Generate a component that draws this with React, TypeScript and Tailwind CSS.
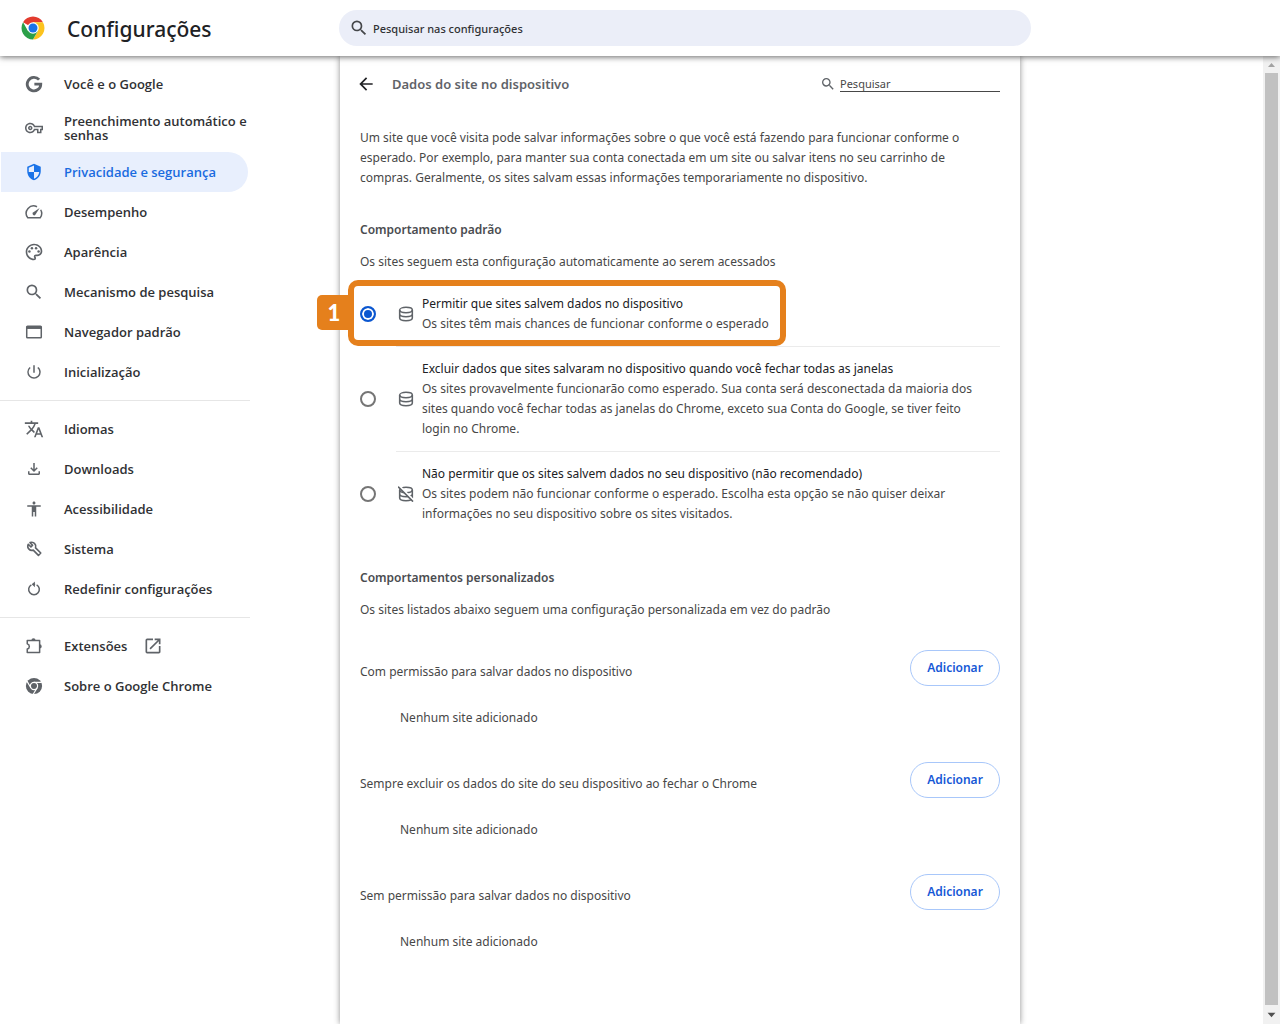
import { useState } from 'react'
import type { ReactNode } from 'react'
import {
  MdAccessibility,
  MdArrowBack,
  MdOpenInNew,
  MdOutlineFileDownload,
  MdOutlinePalette,
  MdOutlineVpnKey,
  MdPowerSettingsNew,
  MdSearch,
  MdSecurity,
  MdTranslate,
} from 'react-icons/md'

function Icon({ children, className = 'size-[18px]' }: { children: ReactNode; className?: string }) {
  return (
    <svg viewBox="0 0 24 24" fill="none" stroke="currentColor" strokeWidth="2" className={className} aria-hidden="true">
      {children}
    </svg>
  )
}

function ChromeLogo() {
  return (
    <svg viewBox="0 0 48 48" className="size-6 shrink-0" aria-hidden="true">
      <path fill="#e33b2e" d="M24 24 4.1 12.5A23 23 0 0 1 43.9 12.5H24Z" />
      <path fill="#fcc31e" d="M24 12.5h19.9A23 23 0 0 1 24 47l10-17.2Z" />
      <path fill="#2b9f48" d="M4.1 12.5A23 23 0 0 0 24 47l10-17.3L24 24l-10 5.8Z" />
      <circle cx="24" cy="24" r="11.5" fill="#fff" />
      <circle cx="24" cy="24" r="9" fill="#1a73e8" />
    </svg>
  )
}

function GoogleIcon() {
  return (
    <Icon>
      <path d="M18.800 6.200A9 9 0 1 0 21 12.200H12.500" strokeWidth="3.800" />
    </Icon>
  )
}

function SpeedIcon() {
  return (
    <Icon>
      <path d="M16 5A9.800 9.800 0 0 0 3.600 19.500h16.800a9.800 9.800 0 0 0 .5-10.500" />
      <path fill="currentColor" stroke="none" d="m19.500 6.500-5.700 9.300a2.100 2.100 0 0 1-3.100-3.100Z" />
    </Icon>
  )
}

function WindowIcon() {
  return (
    <Icon>
      <rect x="2.300" y="4.300" width="19.400" height="15.400" rx="1" />
      <path d="M2 6.200h20" strokeWidth="3.500" />
    </Icon>
  )
}

function WrenchIcon() {
  return (
    <Icon>
      <path
        strokeWidth="2.200"
        strokeLinejoin="round"
        d="m4.300 5.700 3.600 3.500 2.200-2.200L6.700 3.500c2.300-.8 4.800-.3 6.200 1.300 1.500 1.500 1.900 3.700 1.200 5.600l6.900 6.900-3.100 3.100-6.900-6.900c-2 .7-4.200.3-5.700-1.300-1.600-1.600-1.900-4.300-1-6.500Z"
      />
    </Icon>
  )
}

function ResetIcon() {
  return (
    <Icon>
      <path d="M8.500 6.400A7.100 7.100 0 1 0 15.500 6.400" />
      <path d="M13.500 5.800H10" />
      <path fill="currentColor" stroke="none" d="M13.200 2v7.600L9.200 5.800Z" />
    </Icon>
  )
}

function ExtensionIcon() {
  return (
    <Icon>
      <path d="M3 4.500h16.500v16H3V16a3.600 3.600 0 0 0 0-7Z" strokeLinejoin="round" />
      <path fill="currentColor" stroke="none" d="M8.500 4.500a2.800 2.800 0 0 1 5.600 0ZM19.500 9.700a2.800 2.800 0 0 1 0 5.600Z" />
    </Icon>
  )
}

function ChromeIcon() {
  return (
    <Icon>
      <circle cx="12" cy="12" r="10.800" fill="currentColor" stroke="none" />
      <circle cx="12" cy="12" r="4.800" stroke="#fff" strokeWidth="1.600" />
      <path stroke="#fff" strokeWidth="1.600" d="M12 7.200h10.500M7.800 14.400 2.600 5.500M16.200 14.400l-5.400 9" />
    </Icon>
  )
}

function DatabaseIcon({ off = false }: { off?: boolean }) {
  return (
    <Icon className="size-4 shrink-0 text-[#5f6368]">
      <g strokeWidth="2.300">
        <ellipse cx="12" cy="6" rx="9.500" ry="4" />
        <path d="M2.500 6v12c0 2.200 4.300 4 9.500 4s9.500-1.800 9.500-4V6M2.500 12c0 2.200 4.300 4 9.500 4s9.500-1.800 9.500-4" />
      </g>
      {off && (
        <>
          <path d="M2 0 24 22" stroke="#fff" strokeWidth="3" />
          <path d="m0 1 22.500 22.500" strokeWidth="2.300" />
        </>
      )}
    </Icon>
  )
}

const menuGroups: { label: string; icon: ReactNode; active?: boolean; external?: boolean }[][] = [
  [
    { label: 'Você e o Google', icon: <GoogleIcon /> },
    { label: 'Preenchimento automático e senhas', icon: <MdOutlineVpnKey size={18} /> },
    { label: 'Privacidade e segurança', icon: <MdSecurity size={18} />, active: true },
    { label: 'Desempenho', icon: <SpeedIcon /> },
    { label: 'Aparência', icon: <MdOutlinePalette size={20} /> },
    { label: 'Mecanismo de pesquisa', icon: <MdSearch size={20} /> },
    { label: 'Navegador padrão', icon: <WindowIcon /> },
    { label: 'Inicialização', icon: <MdPowerSettingsNew size={18} /> },
  ],
  [
    { label: 'Idiomas', icon: <MdTranslate size={20} /> },
    { label: 'Downloads', icon: <MdOutlineFileDownload size={18} /> },
    { label: 'Acessibilidade', icon: <MdAccessibility size={18} /> },
    { label: 'Sistema', icon: <WrenchIcon /> },
    { label: 'Redefinir configurações', icon: <ResetIcon /> },
  ],
  [
    { label: 'Extensões', icon: <ExtensionIcon />, external: true },
    { label: 'Sobre o Google Chrome', icon: <ChromeIcon /> },
  ],
]

const options = [
  {
    id: 'allow',
    title: 'Permitir que sites salvem dados no dispositivo',
    description: 'Os sites têm mais chances de funcionar conforme o esperado',
  },
  {
    id: 'session',
    title: 'Excluir dados que sites salvaram no dispositivo quando você fechar todas as janelas',
    description:
      'Os sites provavelmente funcionarão como esperado. Sua conta será desconectada da maioria dos sites quando você fechar todas as janelas do Chrome, exceto sua Conta do Google, se tiver feito login no Chrome.',
  },
  {
    id: 'block',
    title: 'Não permitir que os sites salvem dados no seu dispositivo (não recomendado)',
    description:
      'Os sites podem não funcionar conforme o esperado. Escolha esta opção se não quiser deixar informações no seu dispositivo sobre os sites visitados.',
  },
]

const exceptions = [
  'Com permissão para salvar dados no dispositivo',
  'Sempre excluir os dados do site do seu dispositivo ao fechar o Chrome',
  'Sem permissão para salvar dados no dispositivo',
]

function Header() {
  return (
    <header className="relative z-10 flex h-14 items-center bg-white shadow-[0_1px_6px_rgba(0,0,0,0.6)]">
      <div className="flex w-[339px] shrink-0 items-center gap-[22px] pl-[21px]">
        <ChromeLogo />
        <h1 className="pt-0.5 text-[21px] leading-8 font-medium text-[#202124]">Configurações</h1>
      </div>
      <label className="flex h-9 max-w-[692px] flex-1 items-center gap-1 rounded-full bg-[#ebeef8] pl-2.5 text-[#45474a]">
        <MdSearch size={20} />
        <input
          type="search"
          aria-label="Pesquisar nas configurações"
          placeholder="Pesquisar nas configurações"
          className="min-w-0 flex-1 bg-transparent pt-0.5 text-[11px] font-medium outline-none placeholder:text-[#303134]"
        />
      </label>
    </header>
  )
}

function Sidebar() {
  return (
    <nav className="w-[250px] shrink-0 pt-2">
      {menuGroups.map((group, i) => (
        <ul key={i} className={i > 0 ? 'mt-2 border-t border-[#e6e6e6] pt-2' : ''}>
          {group.map((item) => (
            <li key={item.label} className="pr-0.5 pl-px">
              <a
                href="#"
                className={
                  "flex min-h-10 items-center rounded-r-full py-2.5 pl-[23px] font-['Open_Sans',sans-serif] text-[13px] leading-[14px] font-semibold " +
                  (item.active ? 'bg-[#e8effd] text-[#1a6be0]' : 'text-[#303134]')
                }
              >
                <span
                  className={
                    'mr-5 flex size-5 shrink-0 items-center justify-center ' +
                    (item.active ? 'text-[#1a73e8]' : 'text-[#5f6368]')
                  }
                >
                  {item.icon}
                </span>
                {item.label}
                {item.external && <MdOpenInNew size={20} className="ml-4 text-[#5f6368]" />}
              </a>
            </li>
          ))}
        </ul>
      ))}
    </nav>
  )
}

function Highlight() {
  return (
    <span
      aria-hidden="true"
      className="pointer-events-none absolute -top-0.5 bottom-0 -left-3 w-[438px] rounded-[10px] border-6 border-[#e5801c]"
    >
      <span className="absolute top-[9px] -left-[37px] flex h-[35px] w-[34px] items-center justify-center rounded-l-[5px] bg-[#e5801c] font-['Lato',sans-serif] text-[22px] font-black text-white">
        1
      </span>
    </span>
  )
}

function Options() {
  const [selected, setSelected] = useState('allow')

  return (
    <div role="radiogroup" aria-labelledby="default-behavior" className="mt-2.5">
      {options.map((option, i) => (
        <label key={option.id} className="relative flex items-center">
          <input
            type="radio"
            name="site-data"
            value={option.id}
            checked={selected === option.id}
            onChange={() => setSelected(option.id)}
            className="mr-5 size-4 shrink-0 appearance-none rounded-full border-2 border-[#757575] checked:border-[#0b57d0] checked:bg-[#0b57d0] checked:shadow-[inset_0_0_0_2px_#fff]"
          />
          <span
            className={
              'flex min-w-0 flex-1 items-center gap-2 py-3 pr-3 pl-0.5 ' + (i > 0 ? 'border-t border-[#ebebeb]' : '')
            }
          >
            <DatabaseIcon off={option.id === 'block'} />
            <span className="min-w-0 flex-1">
              <span className="block text-[#202124]">{option.title}</span>
              <span className="block">{option.description}</span>
            </span>
          </span>
          {i === 0 && <Highlight />}
        </label>
      ))}
    </div>
  )
}

function Exception({ title }: { title: string }) {
  return (
    <section className="pb-[34px]">
      <div className="flex items-start justify-between">
        <h3 className="pt-3">{title}</h3>
        <button
          type="button"
          className="h-9 w-[90px] rounded-full border border-[#a8c7fa] font-semibold text-[#1558d6]"
        >
          Adicionar
        </button>
      </div>
      <p className="mt-[22px] pl-10">Nenhum site adicionado</p>
    </section>
  )
}

function Scrollbar() {
  return (
    <div aria-hidden="true" className="flex w-[17px] shrink-0 flex-col items-center bg-[#f1f1f1]">
      <svg viewBox="0 0 17 17" className="size-[17px]" fill="#a3a3a3">
        <path d="M5 11h7L8.500 7Z" />
      </svg>
      <div className="w-[13px] flex-1 bg-[#c1c1c1]" />
      <svg viewBox="0 0 17 17" className="size-[19px]" fill="#505050">
        <path d="M5 7h7l-3.500 4Z" />
      </svg>
    </div>
  )
}

export default function App() {
  return (
    <div className="flex min-h-screen flex-col bg-white font-['Noto_Sans',sans-serif] text-xs leading-5 text-[#474747]">
      <Header />
      <div className="flex flex-1">
        <div className="flex flex-1">
          <div className="w-[340px] shrink-0">
            <Sidebar />
          </div>
          <main className="max-w-[680px] flex-1 px-5 shadow-[0_0_6px_rgba(0,0,0,0.45)]">
            <div className="flex h-14 items-center">
              <button type="button" aria-label="Voltar" className="-ml-1 text-[#202124]">
                <MdArrowBack size={20} />
              </button>
              <h2 className="ml-4 flex-1 text-[13px] font-semibold text-[#5f6368]">Dados do site no dispositivo</h2>
              <label className="flex items-center gap-1 text-[#5f6368]">
                <MdSearch size={16} />
                <input
                  type="search"
                  aria-label="Pesquisar"
                  placeholder="Pesquisar"
                  className="h-4 w-40 border-b border-[#474747] bg-transparent text-[11px] outline-none placeholder:text-[#474747]"
                />
              </label>
            </div>
            <p className="mt-4">
              Um site que você visita pode salvar informações sobre o que você está fazendo para funcionar conforme o
              esperado. Por exemplo, para manter sua conta conectada em um site ou salvar itens no seu carrinho de
              compras. Geralmente, os sites salvam essas informações temporariamente no dispositivo.
            </p>
            <h2 id="default-behavior" className="mt-8 font-semibold text-[#4a4c50]">
              Comportamento padrão
            </h2>
            <p className="mt-3">Os sites seguem esta configuração automaticamente ao serem acessados</p>
            <Options />
            <h2 className="mt-8 font-semibold text-[#4a4c50]">Comportamentos personalizados</h2>
            <p className="mt-3 mb-[30px]">
              Os sites listados abaixo seguem uma configuração personalizada em vez do padrão
            </p>
            {exceptions.map((title) => (
              <Exception key={title} title={title} />
            ))}
          </main>
        </div>
        <Scrollbar />
      </div>
    </div>
  )
}
